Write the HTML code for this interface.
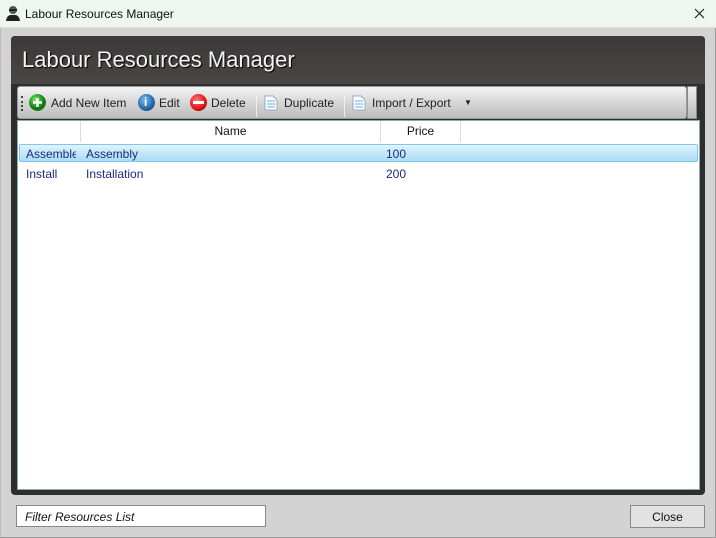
<!DOCTYPE html>
<html><head><style>
*{margin:0;padding:0;box-sizing:border-box}
body{width:716px;height:538px;overflow:hidden;background:#d3d3d3;font-family:"Liberation Sans",sans-serif;position:relative}
.titlebar{position:absolute;left:0;top:0;width:716px;height:28px;background:#eef6f1;border-bottom:1px solid #dcdcdc;font-size:12px;color:#111}
.titlebar .t{position:absolute;left:25px;top:7px}
.frame{position:absolute;left:0;top:28px;width:716px;height:510px;border-left:1px solid #bbb;border-right:1px solid #999;border-bottom:1px solid #999}
.panel{position:absolute;left:11px;top:36px;width:694px;height:459px;background:#2e2e2e;border-radius:4px}
.hdr{position:absolute;left:11px;top:36px;width:694px;height:48px;background:linear-gradient(#3a3838,#4a4646);border-radius:4px 4px 0 0}
.hdr span{position:absolute;left:11px;top:11px;font-size:22px;color:#f4f4f4;text-shadow:1px 1px 1px #000}
.tb{position:absolute;left:17px;top:86px;width:670px;height:33px;background:linear-gradient(#f4f4f4,#d6d6d6 50%,#bdbdbd);border:1px solid #999;border-radius:3px;font-size:12px;color:#222}
.tb .i{position:absolute;top:9px}
.grip{position:absolute;left:3px;top:9px;width:2px;height:15px;border-left:2px dotted #444}
.ov{position:absolute;left:687px;top:86px;width:10px;height:33px;background:linear-gradient(#eee,#bbb);border:1px solid #888}
.sep{position:absolute;top:3px;width:1px;height:27px;background:#999;border-right:1px solid #eee}
.ic{position:absolute;top:7px;width:17px;height:17px;border-radius:50%}
.list{position:absolute;left:17px;top:120px;width:683px;height:370px;background:#fff;border:1px solid #8ab;}
.col{position:absolute;top:0;height:21px;border-right:1px solid #ddd;font-size:12px;color:#111;text-align:center;line-height:21px}
.sel{position:absolute;left:1px;top:23px;width:679px;height:18px;background:linear-gradient(#e0f4fd,#a9dcf6);border:1px solid #84c6ea;border-radius:2px}
.cell{position:absolute;font-size:12px;color:#1a2a80}
.filter{position:absolute;left:16px;top:505px;width:250px;height:22px;background:#fff;border:1px solid #888;font-size:12px;font-style:italic;padding:4px 0 0 8px;color:#111}
.close{position:absolute;left:630px;top:505px;width:75px;height:23px;background:#e2e2e2;border:1px solid #888;font-size:12px;text-align:center;line-height:22px;color:#111}
</style></head><body>
<div class="frame"></div>
<div class="titlebar"><svg style="position:absolute;left:5px;top:5px" width="16" height="17"><circle cx="8" cy="5" r="4" fill="#555"/><rect x="4" y="4" width="8" height="2" fill="#222"/><path d="M1 16 Q2 9 8 10 Q14 9 15 16Z" fill="#222"/></svg><span class="t">Labour Resources Manager</span><svg style="position:absolute;left:694px;top:8px" width="11" height="11"><path d="M1 1L10 10M10 1L1 10" stroke="#222" stroke-width="1.2"/></svg></div>
<div class="panel"></div>
<div class="hdr"><span>Labour Resources Manager</span></div>
<div class="tb">
<div class="grip"></div>
<svg class="ic" style="left:11px" width="17" height="17"><defs><radialGradient id="g" cx="40%" cy="35%"><stop offset="0" stop-color="#9e6"/><stop offset=".6" stop-color="#3a3"/><stop offset="1" stop-color="#171"/></radialGradient></defs><circle cx="8.5" cy="8.5" r="8.5" fill="url(#g)"/><path d="M8.5 4v9M4 8.5h9" stroke="#fff" stroke-width="2.4"/></svg>
<span class="i" style="left:33px">Add New Item</span>
<div class="ic" style="left:120px;background:radial-gradient(circle at 40% 35%,#7be,#26a 60%,#135);"><span style="position:absolute;left:6px;top:1px;color:#fff;font-weight:bold;font-size:12px">i</span></div>
<span class="i" style="left:141px">Edit</span>
<div class="ic" style="left:172px;background:radial-gradient(circle at 40% 35%,#f77,#d11 60%,#700);"><span style="position:absolute;left:3px;top:7px;width:11px;height:3px;background:#fff"></span></div>
<span class="i" style="left:193px">Delete</span>
<div class="sep" style="left:238px"></div>
<svg style="position:absolute;left:246px;top:8px" width="14" height="16"><path d="M1 1h8l4 4v10H1z" fill="#fff" stroke="#9ab"/><path d="M3 6h8M3 9h8M3 12h8" stroke="#6ae"/></svg>
<span class="i" style="left:266px">Duplicate</span>
<div class="sep" style="left:326px"></div>
<svg style="position:absolute;left:334px;top:8px" width="14" height="16"><path d="M1 1h8l4 4v10H1z" fill="#fff" stroke="#9ab"/><path d="M3 6h8M3 9h8M3 12h8" stroke="#6ae"/></svg>
<span class="i" style="left:354px">Import / Export</span>
<span class="i" style="left:446px;font-size:8px;top:11px">▼</span>
</div>
<div class="ov"></div>
<div class="list">
<div class="col" style="left:0;width:63px"></div>
<div class="col" style="left:63px;width:300px">Name</div>
<div class="col" style="left:363px;width:80px">Price</div>
<div class="sel"></div>
<span class="cell" style="left:8px;top:26px;width:50px;overflow:hidden;white-space:nowrap">Assembler</span>
<span class="cell" style="left:68px;top:26px">Assembly</span>
<span class="cell" style="left:368px;top:26px">100</span>
<span class="cell" style="left:8px;top:46px">Install</span>
<span class="cell" style="left:68px;top:46px">Installation</span>
<span class="cell" style="left:368px;top:46px">200</span>
</div>
<div class="filter">Filter Resources List</div>
<div class="close">Close</div>
</body></html>
